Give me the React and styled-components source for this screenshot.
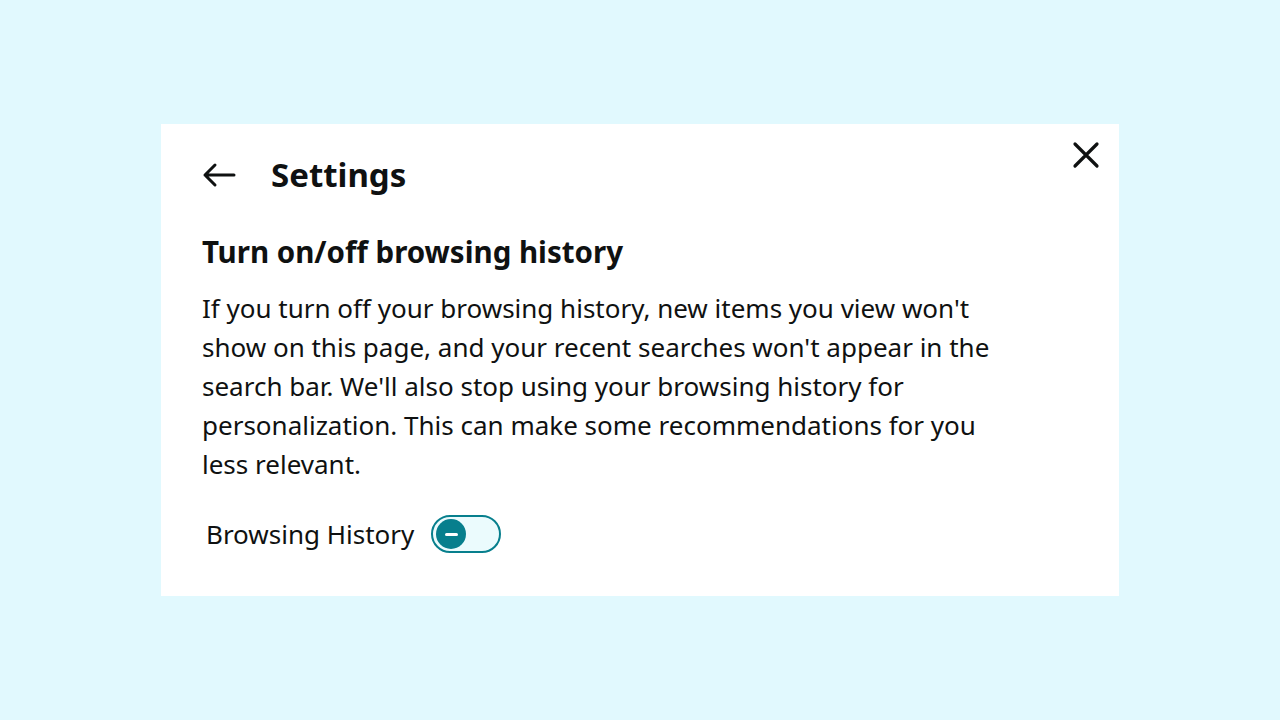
import styled, { createGlobalStyle } from "styled-components";

const Global = createGlobalStyle`
  html, body { margin: 0; padding: 0; }
  body {
    background: #e1f9fe;
    font-family: "Noto Sans", "Open Sans", sans-serif;
    color: #0f1111;
  }
`;

const Page = styled.div`
  width: 1280px;
  height: 720px;
  display: flex;
  align-items: flex-start;
  justify-content: center;
  padding-top: 124px;
  box-sizing: border-box;
`;

const Card = styled.section`
  position: relative;
  width: 958px;
  height: 472px;
  box-sizing: border-box;
  background: #fff;
  padding: 29px 41px 0;
`;

const Header = styled.header`
  display: flex;
  align-items: center;
  gap: 35px;
  height: 44px;
`;

const IconButton = styled.button`
  border: 0;
  background: none;
  padding: 0;
  display: flex;
  align-items: center;
  color: #0f1111;
  cursor: pointer;
`;

const CloseButton = styled(IconButton)`
  position: absolute;
  top: 17px;
  right: 19px;
`;

const Title = styled.h1`
  margin: 0;
  font-size: 33px;
  line-height: 44px;
  font-weight: 700;
`;

const Heading = styled.h2`
  margin: 36px 0 0;
  font-size: 29.5px;
  line-height: 38px;
  font-weight: 700;
`;

const Body = styled.p`
  margin: 18px 0 0;
  width: 800px;
  font-size: 26px;
  line-height: 39px;
  color: #0f1111;
`;

const ToggleRow = styled.label`
  display: flex;
  align-items: center;
  gap: 17px;
  margin-top: 31px;
  padding-left: 4px;
  font-size: 26px;
  line-height: 38px;
`;

const Track = styled.span`
  display: flex;
  align-items: center;
  width: 70px;
  height: 38px;
  box-sizing: border-box;
  border: 2px solid #077f8d;
  border-radius: 19px;
  background: #ebfbfd;
  padding-left: 3px;
`;

const Knob = styled.span`
  width: 30px;
  height: 30px;
  border-radius: 50%;
  background: #077f8d;
  display: flex;
  align-items: center;
  justify-content: center;
  &::after {
    content: "";
    width: 13px;
    height: 3px;
    border-radius: 2px;
    background: #fff;
  }
`;

export default function App() {
  return (
    <>
      <Global />
      <Page>
        <Card>
          <CloseButton aria-label="Close">
            <svg width="28" height="28" viewBox="0 0 28 28" fill="none" stroke="currentColor" strokeWidth="3.2" strokeLinecap="round">
              <path d="M3 3L25 25M25 3L3 25" />
            </svg>
          </CloseButton>
          <Header>
            <IconButton aria-label="Back">
              <svg width="34" height="26" viewBox="0 0 34 26" fill="none" stroke="currentColor" strokeWidth="3" strokeLinecap="round" strokeLinejoin="round">
                <path d="M32 13H3M13 3L3 13L13 23" />
              </svg>
            </IconButton>
            <Title>Settings</Title>
          </Header>
          <Heading>Turn on/off browsing history</Heading>
          <Body>
            If you turn off your browsing history, new items you view won't show on this page, and your recent searches won't appear in the search bar. We'll also stop using your browsing history for personalization. This can make some recommendations for you less relevant.
          </Body>
          <ToggleRow>
            Browsing History
            <Track>
              <Knob />
            </Track>
          </ToggleRow>
        </Card>
      </Page>
    </>
  );
}
